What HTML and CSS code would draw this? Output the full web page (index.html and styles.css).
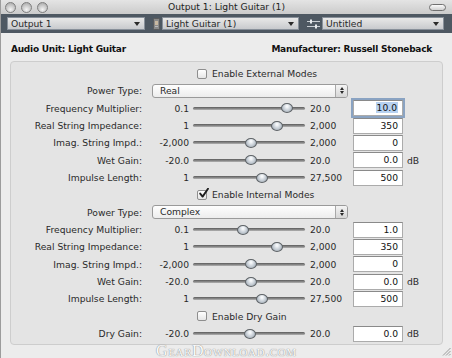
FILE: index.html
```html
<!DOCTYPE html>
<html>
<head>
<meta charset="utf-8">
<title>Output 1: Light Guitar (1)</title>
<link rel="stylesheet" href="styles.css">
</head>
<body>
<div class="window">
  <div class="titlebar">
    <div class="lights"><span class="light"></span><span class="light"></span><span class="light"></span></div>
    <div class="title">Output 1: Light Guitar (1)</div>
    <span class="pill"></span>
  </div>
  <div class="toolbar">
    <div class="tpop w1"><span>Output 1</span><i class="tri"></i></div>
    <svg class="ticon au" width="7" height="12" viewBox="0 0 7 12"><rect x="0.5" y="0.5" width="6" height="11" rx="1" fill="#8a8a8a" stroke="#5c5c5c"/><rect x="2" y="3" width="3" height="4" fill="#c9b8a0"/><rect x="2" y="8" width="3" height="1" fill="#bbbbbb"/></svg>
    <div class="tpop w2"><span>Light Guitar (1)</span><i class="tri"></i></div>
    <svg class="ticon sl" width="13" height="12" viewBox="0 0 13 12"><line x1="0" y1="3.5" x2="13" y2="3.5" stroke="#c8cdd2" stroke-width="1"/><line x1="0" y1="8.5" x2="13" y2="8.5" stroke="#c8cdd2" stroke-width="1"/><rect x="3" y="1.5" width="2" height="4" fill="#e6e9ec"/><rect x="8" y="6.5" width="2" height="4" fill="#e6e9ec"/></svg>
    <div class="tpop w3"><span>Untitled</span><i class="tri"></i></div>
  </div>
  <div class="content">
    <div class="header">
      <span>Audio Unit: Light Guitar</span>
      <span>Manufacturer: Russell Stoneback</span>
    </div>
    <div class="group">
      <div class="row check"><span class="box"></span><span>Enable External Modes</span></div>
      <div class="row"><span class="lbl">Power Type:</span><div class="popup"><span>Real</span><span class="stepper"><i class="up"></i><i class="dn"></i></span></div></div>
      <div class="row"><span class="lbl">Frequency Multiplier:</span><span class="min">0.1</span><div class="track"><span class="thumb" style="left:94px"></span></div><span class="max">20.0</span><span class="field focus"><span class="sel">10.0</span></span></div>
      <div class="row"><span class="lbl">Real String Impedance:</span><span class="min">1</span><div class="track"><span class="thumb" style="left:84px"></span></div><span class="max">2,000</span><span class="field">350</span></div>
      <div class="row"><span class="lbl">Imag. String Impd.:</span><span class="min">-2,000</span><div class="track"><span class="thumb" style="left:57.5px"></span></div><span class="max">2,000</span><span class="field">0</span></div>
      <div class="row"><span class="lbl">Wet Gain:</span><span class="min">-20.0</span><div class="track"><span class="thumb" style="left:57.5px"></span></div><span class="max">20.0</span><span class="field">0.0</span><span class="unit">dB</span></div>
      <div class="row"><span class="lbl">Impulse Length:</span><span class="min">1</span><div class="track"><span class="thumb" style="left:68.5px"></span></div><span class="max">27,500</span><span class="field">500</span></div>
      <div class="row check"><span class="box on"><svg width="12" height="12" viewBox="0 0 12 12"><path d="M2.2 5.6 L4.6 8.6 L10 0.8" fill="none" stroke="#1e1e1e" stroke-width="1.9" stroke-linecap="round" stroke-linejoin="round"/></svg></span><span>Enable Internal Modes</span></div>
      <div class="row"><span class="lbl">Power Type:</span><div class="popup"><span>Complex</span><span class="stepper"><i class="up"></i><i class="dn"></i></span></div></div>
      <div class="row"><span class="lbl">Frequency Multiplier:</span><span class="min">0.1</span><div class="track"><span class="thumb" style="left:50.3px"></span></div><span class="max">20.0</span><span class="field">1.0</span></div>
      <div class="row"><span class="lbl">Real String Impedance:</span><span class="min">1</span><div class="track"><span class="thumb" style="left:84px"></span></div><span class="max">2,000</span><span class="field">350</span></div>
      <div class="row"><span class="lbl">Imag. String Impd.:</span><span class="min">-2,000</span><div class="track"><span class="thumb" style="left:57.5px"></span></div><span class="max">2,000</span><span class="field">0</span></div>
      <div class="row"><span class="lbl">Wet Gain:</span><span class="min">-20.0</span><div class="track"><span class="thumb" style="left:57.5px"></span></div><span class="max">20.0</span><span class="field">0.0</span><span class="unit">dB</span></div>
      <div class="row"><span class="lbl">Impulse Length:</span><span class="min">1</span><div class="track"><span class="thumb" style="left:68.5px"></span></div><span class="max">27,500</span><span class="field">500</span></div>
      <div class="row check"><span class="box"></span><span>Enable Dry Gain</span></div>
      <div class="row"><span class="lbl">Dry Gain:</span><span class="min">-20.0</span><div class="track"><span class="thumb" style="left:57px"></span></div><span class="max">20.0</span><span class="field">0.0</span><span class="unit">dB</span></div>
    </div>
  </div>
  <div class="watermark">GearDownload.com</div>
  <svg class="grip" width="9" height="9" viewBox="0 0 9 9"><path d="M8.5 1 L1 8.5 M8.5 4 L4 8.5 M8.5 7 L7 8.5" stroke="#9a9a9a" stroke-width="1"/></svg>
</div>
</body>
</html>
```

FILE: styles.css
```css
* { box-sizing: border-box; margin: 0; padding: 0; }
html, body { width: 452px; height: 358px; overflow: hidden; }
body {
  background: #ececec;
  font-family: "DejaVu Sans", sans-serif;
  font-size: 9.2px;
  color: #2a2a2a;
}
.window {
  position: relative;
  width: 452px;
  height: 358px;
  display: flex;
  flex-direction: column;
  border-left: 1px solid #9c9c9c;
  background: #ececec;
}
.titlebar {
  height: 14px;
  display: grid;
  grid-template-columns: 1fr auto 1fr;
  align-items: center;
  background: linear-gradient(#e4e4e4, #cbcbcb);
}
.lights { display: flex; gap: 5px; padding-left: 4px; }
.light {
  width: 11px; height: 11px; border-radius: 50%;
  border: 1px solid #7f7f7f;
  background: radial-gradient(circle at 50% 72%, #f4f4f4, #c6c6c6 55%, #a0a0a0);
}
.title { color: #1e1e1e; font-size: 9.2px; line-height: 14px; }
.pill {
  justify-self: end; margin-right: 6px;
  width: 17px; height: 7px; border-radius: 4px;
  border: 1px solid #707070;
  background: linear-gradient(#fbfbfb, #d0d0d0);
}
.toolbar {
  height: 19px;
  display: flex;
  align-items: center;
  padding-left: 6px;
  background: #4e5862;
}
.tpop {
  height: 13px;
  display: flex;
  align-items: center;
  justify-content: space-between;
  padding: 0 4px 0 3px;
  border: 1px solid #88909a;
  background: linear-gradient(#e8e8e8, #c8cacd);
  color: #2a2a2a;
  line-height: 11px;
}
.w1 { width: 138px; }
.w2 { width: 137px; margin-left: 2px; }
.w3 { width: 122px; margin-left: 2px; }
.ticon { margin-left: 8px; flex: none; }
.tri {
  width: 0; height: 0;
  border-left: 3px solid transparent;
  border-right: 3px solid transparent;
  border-top: 4px solid #2a2a2a;
}
.content { flex: 1; display: flex; flex-direction: column; }
.header {
  height: 28px;
  padding: 4px 20px 0 10px;
  display: flex;
  align-items: center;
  justify-content: space-between;
  font-weight: bold;
  font-size: 9px;
  letter-spacing: -0.25px;
  color: #111;
}
.group {
  margin: 0 9px 0 9px;
  padding: 3px 0 2px;
  border: 1px solid #cdcdcd;
  border-radius: 4px;
  background: #e4e4e4;
}
.row {
  height: 17.33px;
  display: flex;
  align-items: center;
  white-space: nowrap;
}
.lbl { width: 131px; text-align: right; }
.min { width: 39px; margin-left: 8px; text-align: right; }
.track {
  position: relative;
  width: 112px; height: 3px;
  margin-left: 4px;
  border-radius: 2px;
  background: linear-gradient(#5b5b5b, #8c8c8c 60%, #b4b4b4);
}
.thumb {
  position: absolute;
  top: 50%;
  width: 12px; height: 10px;
  transform: translate(-50%, -50%);
  border-radius: 50%;
  border: 1px solid #5e6367;
  background: radial-gradient(ellipse at 50% 30%, #f6f8fa 10%, #c3cbd3 55%, #8f98a1);
}
.max { width: 43px; margin-left: 5px; }
.field {
  width: 50px; height: 16px;
  padding-right: 4px;
  text-align: right;
  line-height: 14px;
  border: 1px solid #ababab;
  border-top-color: #8a8a8a;
  background: #fff;
  color: #111;
}
.field.focus {
  box-shadow: 0 0 0 2px #8aa3c2;
}
.sel { background: #b7d1f0; padding: 0 1px; }
.unit { margin-left: 4px; }
.check { padding-left: 186px; gap: 5px; }
.box {
  position: relative;
  width: 10px; height: 10px;
  border: 1px solid #8e8e8e;
  border-radius: 2px;
  background: linear-gradient(#ffffff, #e6e6e6);
}
.box svg { position: absolute; left: 0; top: -3px; }
.popup {
  width: 196px; height: 14px;
  margin-left: 10px;
  display: flex;
  align-items: center;
  justify-content: space-between;
  padding-left: 7px;
  border: 1px solid #9a9a9a;
  border-radius: 3px;
  background: linear-gradient(#fefefe, #ededed);
  line-height: 12px;
}
.stepper {
  width: 12px; height: 12px;
  display: flex;
  flex-direction: column;
  align-items: center;
  justify-content: center;
  gap: 1px;
  border-left: 1px solid #a8a8a8;
  border-radius: 0 2px 2px 0;
  background: linear-gradient(#f4f4f4, #d6d6d6);
}
.up, .dn {
  width: 0; height: 0;
  border-left: 2px solid transparent;
  border-right: 2px solid transparent;
}
.up { border-bottom: 3px solid #2a2a2a; }
.dn { border-top: 3px solid #2a2a2a; }
.watermark {
  position: absolute;
  left: 155px; top: 345px;
  font-family: "Liberation Serif", serif;
  font-variant: small-caps;
  font-size: 16px;
  line-height: 12px;
  letter-spacing: 0.6px;
  color: #fbfbfb;
  text-shadow: 0 0 1px #8a8a8a, 0 0 1px #9a9a9a;
}
.grip { position: absolute; right: 1px; bottom: 2px; }
```
